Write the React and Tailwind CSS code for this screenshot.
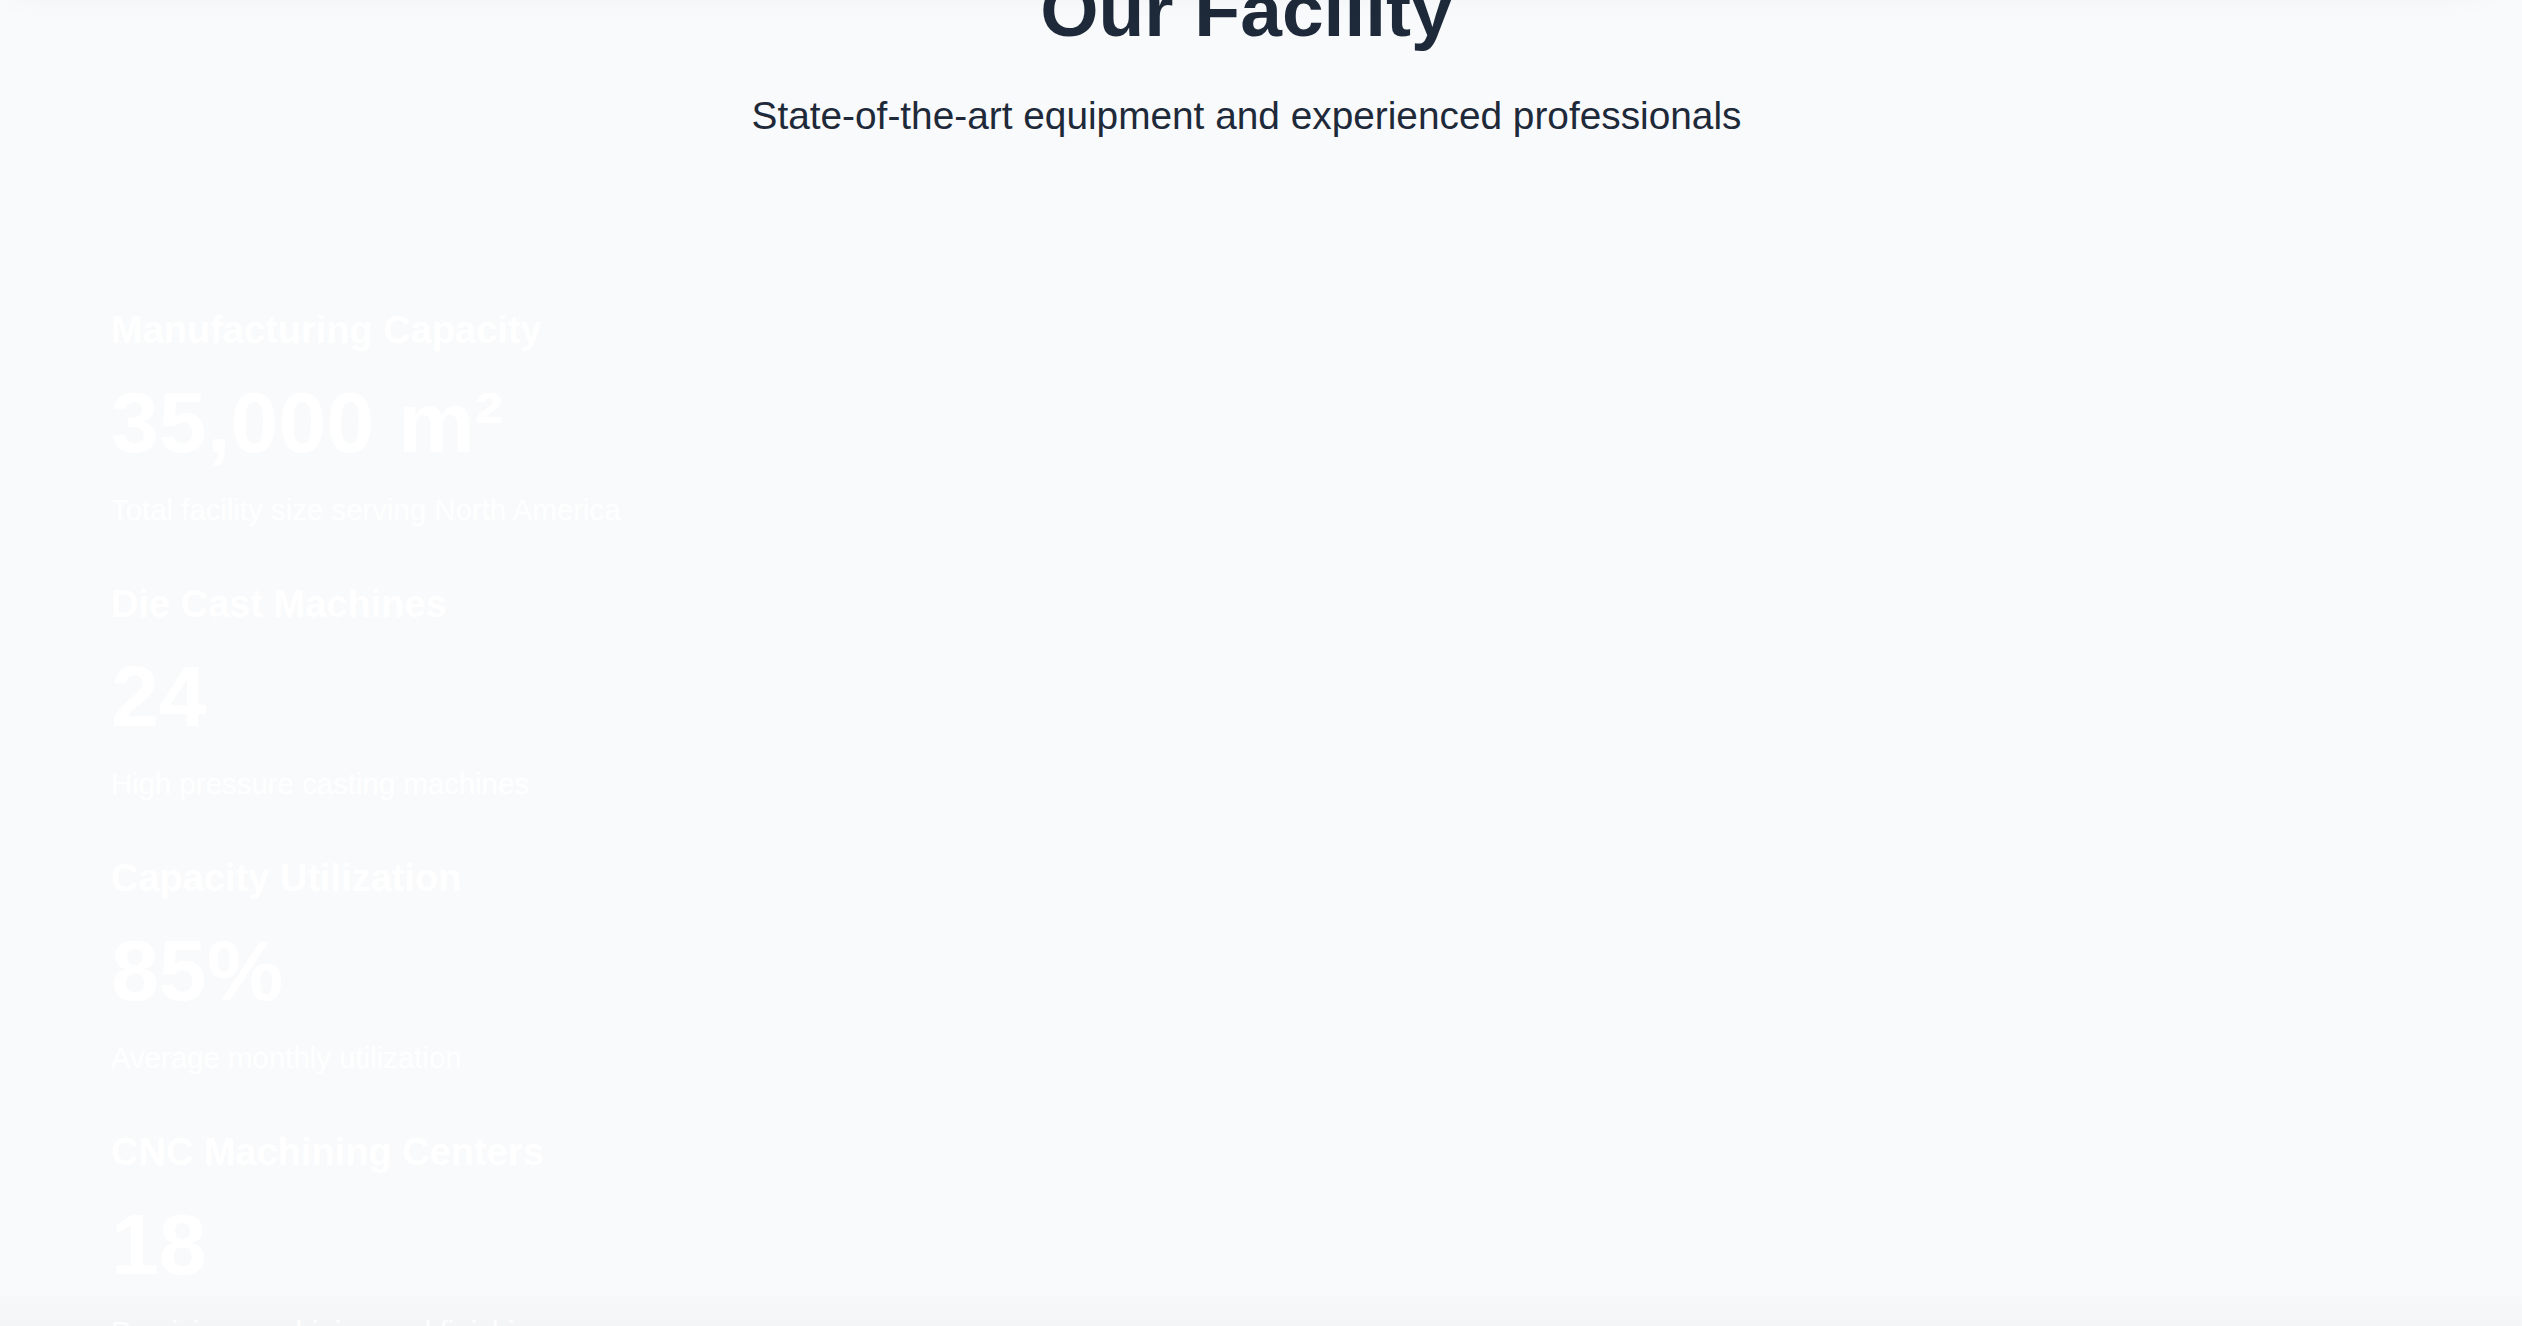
import React from "react";

const stats = [
  {
    label: "Manufacturing Capacity",
    value: (
      <>
        35,000 m<span>²</span>
      </>
    ),
    note: "Total facility size serving North America",
  },
  { label: "Die Cast Machines", value: "24", note: "High pressure casting machines" },
  { label: "Capacity Utilization", value: "85%", note: "Average monthly utilization" },
  { label: "CNC Machining Centers", value: "18", note: "Precision machining and finishing" },
];

function StatItem({ label, value, note }) {
  return (
    <div className="flex flex-col text-white">
      <h3 className="text-[38px] leading-[51px] font-semibold mb-[24px]">{label}</h3>
      <div className="text-[86px] leading-[84px] font-bold mb-[23.5px]">{value}</div>
      <p className="text-[29.4px] leading-[45px] text-white/90">{note}</p>
    </div>
  );
}

export default function App() {
  return (
    <div
      className="h-[1326px] overflow-hidden bg-gradient-to-b from-[#f9fafb] via-[#f9fafb] via-[97%] to-[#f4f5f7]"
      style={{ fontFamily: '"Liberation Sans", Arial, sans-serif' }}
    >
      <div className="w-[2493px] -mt-[160px]">
        {/* header scrolled above the viewport */}
        <header className="relative z-10 h-[120px] bg-[#f9fafb] shadow-[0_30px_45px_-12px_rgba(0,0,0,0.10)]" />

        <section className="pt-[13px]">
          <div className="text-center">
            <h2 className="text-[75px] leading-[75px] font-bold text-[#1e2939]">Our Facility</h2>
            <p className="mt-[42px] text-[38.8px] leading-[51.5px] text-[#1e2939]">
              State-of-the-art equipment and experienced professionals
            </p>
          </div>

          <div className="mt-[163px] pl-[111px] flex flex-col gap-[46.5px]">
            {stats.map((s) => (
              <StatItem key={s.label} {...s} />
            ))}
          </div>
        </section>
      </div>
    </div>
  );
}
